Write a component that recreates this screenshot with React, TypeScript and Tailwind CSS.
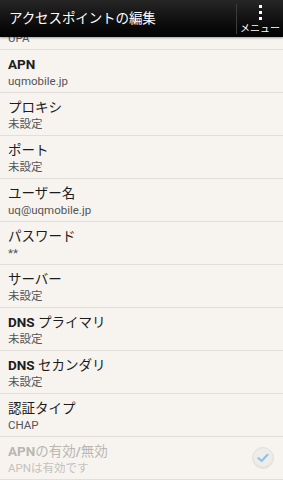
import React from 'react';

type Row = {
  title: React.ReactNode;
  value: string;
  disabled?: boolean;
  checkbox?: boolean;
};

const rows: Row[] = [
  // row scrolled under the action bar, only the value peeks out
  { title: '\u00a0', value: 'UPA' },
  { title: <span className="font-bold">APN</span>, value: 'uqmobile.jp' },
  { title: 'プロキシ', value: '未設定' },
  { title: 'ポート', value: '未設定' },
  { title: 'ユーザー名', value: 'uq@uqmobile.jp' },
  { title: 'パスワード', value: '**' },
  { title: 'サーバー', value: '未設定' },
  {
    title: (
      <>
        <span className="font-bold">DNS</span> プライマリ
      </>
    ),
    value: '未設定',
  },
  {
    title: (
      <>
        <span className="font-bold">DNS</span> セカンダリ
      </>
    ),
    value: '未設定',
  },
  { title: '認証タイプ', value: 'CHAP' },
  {
    title: (
      <>
        <span className="font-bold">APN</span>の有効<span className="font-bold">/</span>無効
      </>
    ),
    value: 'APNは有効です',
    disabled: true,
    checkbox: true,
  },
];

const font = { fontFamily: "Roboto, 'Noto Sans CJK JP', sans-serif" };

const App: React.FC = () => {
  return (
    <div className="w-[283px] h-[480px] overflow-hidden flex flex-col bg-[#f7f4f0]" style={font}>
      {/* Action bar */}
      <div className="relative z-10 h-[37px] shrink-0 flex items-center bg-gradient-to-b from-[#262626] to-[#030303] shadow-[0_1px_2px_rgba(0,0,0,0.35)]">
        <div className="flex-1 pl-[9px] text-white text-[13.5px] leading-none tracking-[-0.1px]">
          アクセスポイントの編集
        </div>
        <div className="w-px h-[30px] bg-[#3c3c3c]" />
        <div className="w-[46px] h-full flex flex-col items-center pt-[5px]">
          <div className="flex flex-col gap-[3px]">
            <span className="w-[3px] h-[3px] bg-white" />
            <span className="w-[3px] h-[3px] bg-white" />
            <span className="w-[3px] h-[3px] bg-white" />
          </div>
          <div className="mt-[3px] text-white text-[10px] leading-[12px] whitespace-nowrap">メニュー</div>
        </div>
      </div>

      {/* Preference list */}
      <div className="flex-1 overflow-hidden">
        <div className="-mt-[30px]">
          {rows.map((row, i) => (
            <div
              key={i}
              className="h-[43px] border-b border-[#e2ded9] flex items-start pl-[8px] pr-[9px] pt-[5px]"
            >
              <div className="flex-1">
                <div
                  className={`text-[13.5px] leading-[18px] ${
                    row.disabled ? 'text-[#b9b7b4]' : 'text-[#1c1c1c]'
                  }`}
                >
                  {row.title}
                </div>
                <div
                  className={`text-[11.5px] leading-[16px] ${
                    row.disabled ? 'text-[#c4c2bf]' : 'text-[#555555]'
                  }`}
                >
                  {row.value}
                </div>
              </div>
              {row.checkbox && (
                <div className="mt-[5px] w-[22px] h-[22px] rounded-full bg-[#efedea] border border-[#e3e0dc] shadow-[inset_0_-1px_2px_rgba(0,0,0,0.06)] flex items-center justify-center">
                  <svg width="12" height="10" viewBox="0 0 12 10" fill="none">
                    <path d="M1.5 5.2 L4.6 8 L10.5 1.8" stroke="#8cc6e6" strokeWidth="2.2" strokeLinecap="round" strokeLinejoin="round" />
                  </svg>
                </div>
              )}
            </div>
          ))}
        </div>
      </div>
    </div>
  );
};

export default App;
